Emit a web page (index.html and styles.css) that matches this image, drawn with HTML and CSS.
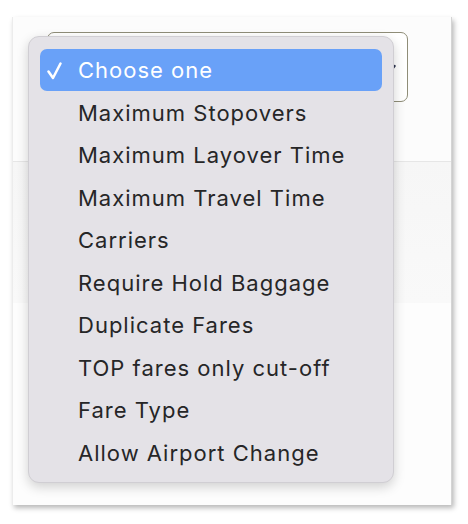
FILE: index.html
```html
<!DOCTYPE html>
<html>
<head>
<meta charset="utf-8">
<link rel="stylesheet" href="styles.css">
</head>
<body>
<div class="card">
  <div class="top">
    <div class="select">
      <svg class="arrow" width="8" height="10" viewBox="0 0 8 10"><path d="M1.5 8 L5.5 3" stroke="#2e3550" stroke-width="2.4" stroke-linecap="round" fill="none"/></svg>
    </div>
  </div>
  <div class="mid"></div>
  <div class="bottom"></div>
  <ul class="menu">
    <li class="item selected">
      <svg class="check" width="16" height="20" viewBox="0 0 16 20"><path d="M1.5 10.5 L6 17 L13.5 2.5" stroke="#fff" stroke-width="2.5" stroke-linecap="round" stroke-linejoin="round" fill="none"/></svg>
      <span>Choose one</span>
    </li>
    <li class="item"><span>Maximum Stopovers</span></li>
    <li class="item"><span>Maximum Layover Time</span></li>
    <li class="item"><span>Maximum Travel Time</span></li>
    <li class="item"><span>Carriers</span></li>
    <li class="item"><span>Require Hold Baggage</span></li>
    <li class="item"><span>Duplicate Fares</span></li>
    <li class="item"><span>TOP fares only cut-off</span></li>
    <li class="item"><span>Fare Type</span></li>
    <li class="item"><span>Allow Airport Change</span></li>
  </ul>
</div>
</body>
</html>
```

FILE: styles.css
```css
html, body {
  margin: 0;
  padding: 0;
  background: #ffffff;
}
body {
  width: 468px;
  height: 524px;
  overflow: hidden;
  font-family: Inter, "Noto Sans", sans-serif;
}
.card {
  position: relative;
  margin: 17px 0 0 12px;
  width: 438px;
  height: 488px;
  background: #ffffff;
  border-right: 1px solid #d4d4d4;
  border-left: 1px solid #ececec;
  box-shadow: 2px 3px 5px rgba(0,0,0,0.28);
  display: flex;
  flex-direction: column;
}
.top {
  height: 145px;
  padding: 15px 0 0 34px;
  box-sizing: border-box;
  border-bottom: 1px solid #e6e6e6;
  background: #fcfcfc;
}
.select {
  position: relative;
  width: 361px;
  height: 70px;
  box-sizing: border-box;
  border: 1.5px solid #8f8d78;
  border-radius: 7px;
  background: #fff;
}
.arrow {
  position: absolute;
  right: 10px;
  top: 30px;
}
.mid {
  height: 141px;
  background: linear-gradient(#f6f6f6, #f9f9f9);
}
.bottom {
  flex: 1;
  background: #fdfdfd;
}
.menu {
  position: absolute;
  left: 15px;
  top: 19px;
  width: 366px;
  height: 447px;
  box-sizing: border-box;
  margin: 0;
  padding: 12px 11px 10px 11px;
  list-style: none;
  background: #e4e2e7;
  border: 1px solid #d0ced3;
  border-radius: 11px;
  box-shadow: 0 4px 12px rgba(0,0,0,0.18);
}
.item {
  position: relative;
  height: 42.5px;
  display: flex;
  align-items: center;
  padding-left: 38px;
  font-size: 22px;
  color: #262627;
  letter-spacing: 1px;
}
.item.selected {
  background: #69a1f8;
  color: #ffffff;
  border-radius: 7px;
  height: 42px;
  margin-bottom: 0.5px;
}
.check {
  position: absolute;
  left: 7px;
  top: 12px;
}
```
